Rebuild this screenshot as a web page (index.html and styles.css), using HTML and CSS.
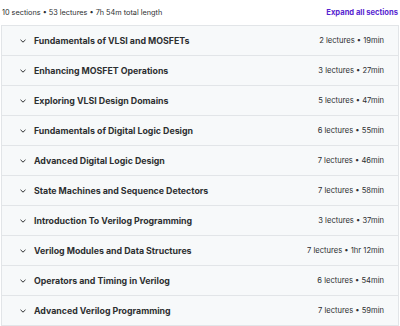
FILE: index.html
```html
<!DOCTYPE html>
<html>
<head>
    <title>Course content</title>
    <link rel="stylesheet" href="styles.css">
</head>
<body>
    <div class="curriculum">
        <div class="summary">
            <span>10 sections • 53 lectures • 7h 54m total length</span>
            <button class="expand-all">Expand all sections</button>
        </div>

        <div class="sections">
            <div class="section">
                <span class="chevron"><svg viewBox="0 0 10 10"><path d="M2.5 3.8 5 6.2 7.5 3.8"/></svg></span>
                <span class="section-title">Fundamentals of VLSI and MOSFETs</span>
                <span class="section-meta">2 lectures • 19min</span>
            </div>
            <div class="section">
                <span class="chevron"><svg viewBox="0 0 10 10"><path d="M2.5 3.8 5 6.2 7.5 3.8"/></svg></span>
                <span class="section-title">Enhancing MOSFET Operations</span>
                <span class="section-meta">3 lectures • 27min</span>
            </div>
            <div class="section">
                <span class="chevron"><svg viewBox="0 0 10 10"><path d="M2.5 3.8 5 6.2 7.5 3.8"/></svg></span>
                <span class="section-title">Exploring VLSI Design Domains</span>
                <span class="section-meta">5 lectures • 47min</span>
            </div>
            <div class="section">
                <span class="chevron"><svg viewBox="0 0 10 10"><path d="M2.5 3.8 5 6.2 7.5 3.8"/></svg></span>
                <span class="section-title">Fundamentals of Digital Logic Design</span>
                <span class="section-meta">6 lectures • 55min</span>
            </div>
            <div class="section">
                <span class="chevron"><svg viewBox="0 0 10 10"><path d="M2.5 3.8 5 6.2 7.5 3.8"/></svg></span>
                <span class="section-title">Advanced Digital Logic Design</span>
                <span class="section-meta">7 lectures • 46min</span>
            </div>
            <div class="section">
                <span class="chevron"><svg viewBox="0 0 10 10"><path d="M2.5 3.8 5 6.2 7.5 3.8"/></svg></span>
                <span class="section-title">State Machines and Sequence Detectors</span>
                <span class="section-meta">7 lectures • 58min</span>
            </div>
            <div class="section">
                <span class="chevron"><svg viewBox="0 0 10 10"><path d="M2.5 3.8 5 6.2 7.5 3.8"/></svg></span>
                <span class="section-title">Introduction To Verilog Programming</span>
                <span class="section-meta">3 lectures • 37min</span>
            </div>
            <div class="section">
                <span class="chevron"><svg viewBox="0 0 10 10"><path d="M2.5 3.8 5 6.2 7.5 3.8"/></svg></span>
                <span class="section-title">Verilog Modules and Data Structures</span>
                <span class="section-meta">7 lectures • 1hr 12min</span>
            </div>
            <div class="section">
                <span class="chevron"><svg viewBox="0 0 10 10"><path d="M2.5 3.8 5 6.2 7.5 3.8"/></svg></span>
                <span class="section-title">Operators and Timing in Verilog</span>
                <span class="section-meta">6 lectures • 54min</span>
            </div>
            <div class="section">
                <span class="chevron"><svg viewBox="0 0 10 10"><path d="M2.5 3.8 5 6.2 7.5 3.8"/></svg></span>
                <span class="section-title">Advanced Verilog Programming</span>
                <span class="section-meta">7 lectures • 59min</span>
            </div>
        </div>
    </div>
</body>
</html>
```

FILE: styles.css
```css
body {
    margin: 0;
    background: #fff;
    font-family: Inter, "Liberation Sans", sans-serif;
    color: #2d2f31;
}
.curriculum {
    width: 400px;
}
.summary {
    display: flex;
    justify-content: space-between;
    align-items: center;
    height: 25px;
    padding: 0 2px 0 2px;
    font-size: 7.3px;
    color: #2d2f31;
}
.expand-all {
    background: none;
    border: none;
    padding: 0;
    font-family: inherit;
    font-size: 7.6px;
    font-weight: 700;
    color: #5624d0;
    cursor: pointer;
}
.sections {
    border: 1px solid #e2e5e8;
    border-bottom: none;
    margin: 0 1px;
}
.section {
    display: flex;
    align-items: center;
    height: 29px;
    padding: 0 14px 0 16px;
    background: #f7f9fa;
    border-bottom: 1px solid #e2e5e8;
}
.chevron {
    width: 10px;
    height: 10px;
    margin-right: 6px;
    display: flex;
}
.chevron svg {
    width: 10px;
    height: 10px;
    fill: none;
    stroke: #2d2f31;
    stroke-width: 1;
}
.section-title {
    flex: 1;
    font-size: 8.8px;
    font-weight: 700;
}
.section-meta {
    font-size: 7.6px;
    color: #2d2f31;
}
```
